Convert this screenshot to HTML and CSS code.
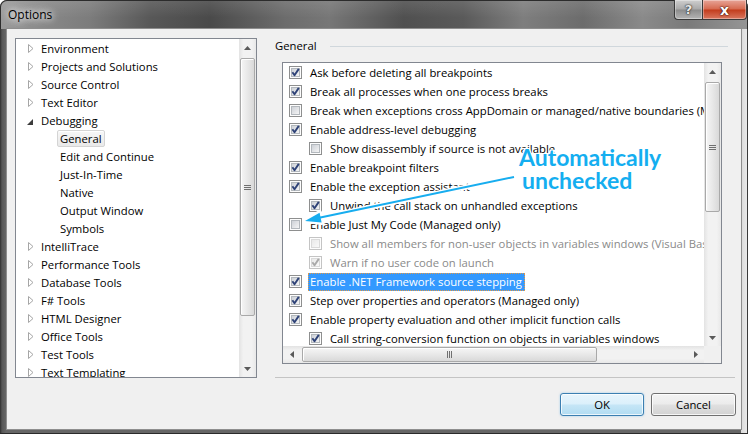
FILE: index.html
```html
<!DOCTYPE html>
<html>
<head>
<meta charset="utf-8">
<title>Options</title>
<link rel="stylesheet" href="styles.css">
</head>
<body>
<svg class="defs" width="0" height="0">
  <defs>
    <linearGradient id="cbg" x1="0" y1="0" x2="1" y2="1"><stop offset="0" stop-color="#cbcfd5"/><stop offset="1" stop-color="#f7f7f7"/></linearGradient>
    <linearGradient id="cbgd" x1="0" y1="0" x2="1" y2="1"><stop offset="0" stop-color="#e8e8e8"/><stop offset="1" stop-color="#fafafa"/></linearGradient>
    <symbol id="box" viewBox="0 0 13 13"><rect x=".5" y=".5" width="12" height="12" fill="#fdfdfd" stroke="#8e8f8f"/><rect x="2.5" y="2.5" width="8" height="8" fill="url(#cbg)" stroke="#b3b8bd"/></symbol>
    <symbol id="boxd" viewBox="0 0 13 13"><rect x=".5" y=".5" width="12" height="12" fill="#fdfdfd" stroke="#c4c4c4"/><rect x="2.5" y="2.5" width="8" height="8" fill="url(#cbgd)" stroke="#dadada"/></symbol>
    <symbol id="chk" viewBox="0 0 13 13"><path d="M3.4 6.2 L5.5 9.2 L9.8 2.9" fill="none" stroke="#2e4277" stroke-width="1.9" stroke-linejoin="round"/></symbol>
    <symbol id="chkd" viewBox="0 0 13 13"><path d="M3.4 6.2 L5.5 9.2 L9.8 2.9" fill="none" stroke="#a9a9a9" stroke-width="1.9" stroke-linejoin="round"/></symbol>
    <symbol id="tc" viewBox="0 0 6 9"><path d="M.5 .5 L5 4.5 L.5 8.5Z" fill="#fff" stroke="#a6a6a6"/></symbol>
    <symbol id="te" viewBox="0 0 6 6"><path d="M6 0 V6 H0Z" fill="#3c3c3c"/></symbol>
    <symbol id="aup" viewBox="0 0 7 4"><path d="M0 4 L3.5 0 L7 4Z" fill="#5a5a5a"/></symbol>
    <symbol id="adn" viewBox="0 0 7 4"><path d="M0 0 L3.5 4 L7 0Z" fill="#5a5a5a"/></symbol>
    <symbol id="alf" viewBox="0 0 4 7"><path d="M4 0 L0 3.5 L4 7Z" fill="#5a5a5a"/></symbol>
    <symbol id="art" viewBox="0 0 4 7"><path d="M0 0 L4 3.5 L0 7Z" fill="#5a5a5a"/></symbol>
  </defs>
</svg>

<div class="window">
  <div class="titlebar">
    <div class="title">Options</div>
    <div class="capbtns">
      <div class="cbtn help">?</div>
      <div class="cbtn close">x</div>
    </div>
  </div>

  <div class="client">
    <div class="main">
      <div class="tree">
        <div class="tree-items">
          <div class="ti"><svg class="tg"><use href="#tc"/></svg><span>Environment</span></div>
          <div class="ti"><svg class="tg"><use href="#tc"/></svg><span>Projects and Solutions</span></div>
          <div class="ti"><svg class="tg"><use href="#tc"/></svg><span>Source Control</span></div>
          <div class="ti"><svg class="tg"><use href="#tc"/></svg><span>Text Editor</span></div>
          <div class="ti"><svg class="tg ex"><use href="#te"/></svg><span>Debugging</span></div>
          <div class="ti child"><span class="sel">General</span></div>
          <div class="ti child"><span>Edit and Continue</span></div>
          <div class="ti child"><span>Just-In-Time</span></div>
          <div class="ti child"><span>Native</span></div>
          <div class="ti child"><span>Output Window</span></div>
          <div class="ti child"><span>Symbols</span></div>
          <div class="ti"><svg class="tg"><use href="#tc"/></svg><span>IntelliTrace</span></div>
          <div class="ti"><svg class="tg"><use href="#tc"/></svg><span>Performance Tools</span></div>
          <div class="ti"><svg class="tg"><use href="#tc"/></svg><span>Database Tools</span></div>
          <div class="ti"><svg class="tg"><use href="#tc"/></svg><span>F# Tools</span></div>
          <div class="ti"><svg class="tg"><use href="#tc"/></svg><span>HTML Designer</span></div>
          <div class="ti"><svg class="tg"><use href="#tc"/></svg><span>Office Tools</span></div>
          <div class="ti"><svg class="tg"><use href="#tc"/></svg><span>Test Tools</span></div>
          <div class="ti"><svg class="tg"><use href="#tc"/></svg><span>Text Templating</span></div>
        </div>
        <div class="vscroll">
          <div class="sbtn"><svg class="sa"><use href="#aup"/></svg></div>
          <div class="strack"><div class="vthumb tree-thumb"><span class="vgrip"></span></div></div>
          <div class="sbtn"><svg class="sa"><use href="#adn"/></svg></div>
        </div>
      </div>

      <div class="pane">
        <div class="pane-head"><span class="ph-text">General</span><span class="hline"></span></div>
        <div class="listbox">
          <div class="rows">
            <div class="r"><svg class="cb"><use href="#box"/><use href="#chk"/></svg><span>Ask before deleting all breakpoints</span></div>
            <div class="r"><svg class="cb"><use href="#box"/><use href="#chk"/></svg><span>Break all processes when one process breaks</span></div>
            <div class="r"><svg class="cb"><use href="#box"/></svg><span>Break when exceptions cross AppDomain or managed/native boundaries (Managed only)</span></div>
            <div class="r"><svg class="cb"><use href="#box"/><use href="#chk"/></svg><span>Enable address-level debugging</span></div>
            <div class="r n"><svg class="cb"><use href="#box"/></svg><span>Show disassembly if source is not available</span></div>
            <div class="r"><svg class="cb"><use href="#box"/><use href="#chk"/></svg><span>Enable breakpoint filters</span></div>
            <div class="r"><svg class="cb"><use href="#box"/><use href="#chk"/></svg><span>Enable the exception assistant</span></div>
            <div class="r n"><svg class="cb"><use href="#box"/><use href="#chk"/></svg><span>Unwind the call stack on unhandled exceptions</span></div>
            <div class="r"><svg class="cb"><use href="#box"/></svg><span>Enable Just My Code (Managed only)</span></div>
            <div class="r n dis"><svg class="cb"><use href="#boxd"/></svg><span>Show all members for non-user objects in variables windows (Visual Basic only)</span></div>
            <div class="r n dis"><svg class="cb"><use href="#boxd"/><use href="#chkd"/></svg><span>Warn if no user code on launch</span></div>
            <div class="r"><svg class="cb"><use href="#box"/><use href="#chk"/></svg><span class="hl">Enable .NET Framework source stepping</span></div>
            <div class="r"><svg class="cb"><use href="#box"/><use href="#chk"/></svg><span>Step over properties and operators (Managed only)</span></div>
            <div class="r"><svg class="cb"><use href="#box"/><use href="#chk"/></svg><span>Enable property evaluation and other implicit function calls</span></div>
            <div class="r n"><svg class="cb"><use href="#box"/><use href="#chk"/></svg><span>Call string-conversion function on objects in variables windows</span></div>
          </div>
          <div class="vscroll">
            <div class="sbtn"><svg class="sa"><use href="#aup"/></svg></div>
            <div class="strack"><div class="vthumb list-thumb"><span class="vgrip"></span></div></div>
            <div class="sbtn"><svg class="sa"><use href="#adn"/></svg></div>
          </div>
          <div class="hscroll">
            <div class="hbtn"><svg class="sah"><use href="#alf"/></svg></div>
            <div class="htrack"><div class="hthumb"><span class="hgrip"></span></div></div>
            <div class="hbtn"><svg class="sah"><use href="#art"/></svg></div>
          </div>
          <div class="corner"></div>
        </div>
        <div class="sep"></div>
      </div>
    </div>

    <div class="buttons">
      <button class="btn ok">OK</button>
      <button class="btn cancel">Cancel</button>
    </div>
  </div>
</div>

<div class="callout">
  <div class="c1">Automatically</div>
  <div class="c2">unchecked</div>
</div>

<svg class="arrow" viewBox="0 0 751 434" width="751" height="434">
  <g stroke="#ffffff" stroke-width="5" stroke-linecap="round" stroke-linejoin="round" fill="#ffffff">
    <line x1="514" y1="177" x2="320" y2="217.7"/>
    <polygon points="305,221 321.6,222.6 319.6,212.8"/>
  </g>
  <line x1="514" y1="177" x2="318" y2="218" stroke="#17adef" stroke-width="2"/>
  <polygon points="305,221 321.6,222.6 319.6,212.8" fill="#17adef"/>
</svg>
</body>
</html>
```

FILE: styles.css
```css
* { box-sizing: border-box; }

html, body {
  margin: 0;
  padding: 0;
  background: #ffffff;
}

body {
  width: 751px;
  height: 434px;
  overflow: hidden;
  position: relative;
  font-family: "Open Sans", "Segoe UI", sans-serif;
  font-size: 11.3px;
  color: #000;
}

.defs {
  display: block;
  width: 0;
  height: 0;
  overflow: hidden;
  position: absolute;
}

/* ---------- window frame ---------- */
.window {
  width: 748px;
  height: 434px;
  display: flex;
  flex-direction: column;
  border-radius: 7px 7px 0 0;
  background: linear-gradient(to right, #2e2e2e 0px, #575757 2px, #666 6px, #666 741px, #d9d9d9 741px, #e9e9e9 747px, #3a3a3a 747px);
  box-shadow: inset 0 -1px 0 #2a2a2a;
}

.titlebar {
  height: 29px;
  flex: none;
  display: flex;
  justify-content: space-between;
  align-items: flex-start;
  border-radius: 7px 7px 0 0;
  border: 1px solid #2c2c2c;
  border-bottom: none;
  background:
    linear-gradient(to bottom, rgba(255,255,255,0.10), rgba(255,255,255,0) 60%),
    linear-gradient(to right, #9a9a9a 0%, #888 6%, #7c7c7c 12%, #585858 20%, #4a4a4a 28%, #6c6c6c 38%, #777 44%, #505050 54%, #5a5a5a 62%, #7e7e7e 70%, #6c6c6c 78%, #8a8a8a 86%, #7a7a7a 92%, #959595 100%);
}

.title {
  line-height: 28px;
  padding-left: 7px;
  font-size: 12px;
  color: #000;
  text-shadow: 0 0 6px #fff, 0 0 10px rgba(255,255,255,0.8), 0 0 14px rgba(255,255,255,0.6);
}

.capbtns {
  display: flex;
  margin-top: -1px;
}

.cbtn {
  height: 20px;
  border: 1px solid #3a3a3a;
  border-top: none;
  display: flex;
  align-items: center;
  justify-content: center;
  font-family: "DejaVu Sans", sans-serif;
  font-weight: bold;
  color: #fff;
  box-shadow: inset 0 0 0 1px rgba(255,255,255,0.35);
}

.help {
  width: 28px;
  border-radius: 0 0 0 4px;
  border-right: none;
  font-size: 13px;
  color: #e8e8e8;
  text-shadow: 0 0 2px #222, 0 0 1px #000;
  background: linear-gradient(#cfcfcf, #a9a9a9 48%, #8c8c8c 52%, #b4b4b4);
}

.close {
  width: 45px;
  border-radius: 0 0 4px 0;
  font-size: 14px;
  text-shadow: 0 0 2px #3a0a00, 0 0 1px #000;
  background: linear-gradient(#e7a598, #d6694f 48%, #c23c1c 52%, #d9775f);
}

/* ---------- client area ---------- */
.client {
  flex: 1;
  margin: 0 7px 5px 7px;
  background: #f0f0f0;
  padding: 9px 5px 0 8px;
  display: flex;
  flex-direction: column;
  box-shadow: 0 0 0 1px #8e8e8e;
}

.main {
  display: flex;
  height: 340px;
}

/* ---------- tree ---------- */
.tree {
  width: 242px;
  height: 340px;
  flex: none;
  border: 1px solid #828790;
  background: #fff;
  display: flex;
}

.tree-items {
  flex: 1;
  overflow: hidden;
}

.ti {
  height: 18px;
  display: flex;
  align-items: center;
  white-space: nowrap;
}

.tg {
  width: 6px;
  height: 9px;
  flex: none;
  margin-left: 12px;
  margin-right: 7px;
}

.tg.ex {
  width: 6px;
  height: 6px;
  margin-left: 11px;
  margin-right: 8px;
  margin-top: 3px;
}

.ti.child {
  padding-left: 44px;
}

.sel {
  margin-left: -3px;
  height: 17px;
  line-height: 15px;
  padding: 0 2px;
  border: 1px solid #d4d4d4;
  border-radius: 2px;
  background: linear-gradient(#f7f7f7, #e9e9e9);
  box-shadow: inset 0 1px 0 #fff;
}

/* ---------- scrollbars ---------- */
.vscroll {
  width: 17px;
  flex: none;
  display: flex;
  flex-direction: column;
  background: linear-gradient(to right, #e3e3e3, #f2f2f2 25%, #f2f2f2 75%, #e8e8e8);
}

.sbtn {
  height: 17px;
  flex: none;
  display: flex;
  align-items: center;
  justify-content: center;
}

.sa {
  width: 7px;
  height: 4px;
}

.strack {
  flex: 1;
  display: flex;
  flex-direction: column;
  padding: 0 1px;
}

.vthumb {
  margin-top: 2px;
  border: 1px solid #a9a9a9;
  border-radius: 2px;
  background: linear-gradient(to right, #f6f6f6, #e8e8e8 50%, #d9d9d9);
  box-shadow: inset 1px 1px 0 #fff;
  display: flex;
  align-items: center;
  justify-content: center;
}

.tree-thumb { height: 258px; }
.list-thumb { height: 130px; }

.vgrip {
  width: 7px;
  height: 5px;
  background: repeating-linear-gradient(to bottom, #707070 0, #707070 1px, transparent 1px, transparent 2px);
}

.hscroll {
  grid-column: 1;
  grid-row: 2;
  height: 17px;
  display: flex;
  background: linear-gradient(to bottom, #e3e3e3, #f2f2f2 25%, #f2f2f2 75%, #e8e8e8);
}

.hbtn {
  width: 17px;
  flex: none;
  display: flex;
  align-items: center;
  justify-content: center;
}

.sah {
  width: 4px;
  height: 7px;
}

.htrack {
  flex: 1;
  display: flex;
  padding: 1px 0;
}

.hthumb {
  margin-left: 2px;
  width: 295px;
  border: 1px solid #a9a9a9;
  border-radius: 2px;
  background: linear-gradient(to bottom, #f6f6f6, #e8e8e8 50%, #d9d9d9);
  box-shadow: inset 1px 1px 0 #fff;
  display: flex;
  align-items: center;
  justify-content: center;
}

.hgrip {
  width: 5px;
  height: 7px;
  background: repeating-linear-gradient(to right, #707070 0, #707070 1px, transparent 1px, transparent 2px);
}

.corner {
  grid-column: 2;
  grid-row: 2;
  background: #f0f0f0;
}

/* ---------- right pane ---------- */
.pane {
  width: 460px;
  margin-left: 18px;
  display: flex;
  flex-direction: column;
}

.pane-head {
  height: 16px;
  display: flex;
  align-items: center;
}

.ph-text {
  width: 55px;
  line-height: 16px;
}

.hline {
  flex: 1;
  height: 1px;
  margin-right: 7px;
  background: #d0d7dc;
}

.listbox {
  margin: 8px 0 0 7px;
  width: 440px;
  height: 302px;
  border: 1px solid #828790;
  background: #fff;
  display: grid;
  grid-template-columns: 1fr 17px;
  grid-template-rows: 1fr 17px;
}

.rows {
  grid-column: 1;
  grid-row: 1;
  overflow: hidden;
}

.r {
  height: 19px;
  display: flex;
  align-items: center;
  white-space: nowrap;
  padding-left: 6px;
}

.r.n { padding-left: 26px; }

.cb {
  width: 13px;
  height: 13px;
  flex: none;
  margin-right: 8px;
}

.r.dis { color: #8a8a8a; }

.hl {
  margin-left: -2px;
  padding: 0 2px 0 1px;
  height: 18px;
  line-height: 16px;
  background: #3399ff;
  color: #fff;
  border: 1px dotted #e59a45;
}

.sep {
  margin-top: 13px;
  height: 1px;
  background: #c4c4c4;
}

/* ---------- buttons ---------- */
.buttons {
  margin-top: 15px;
  display: flex;
  justify-content: flex-end;
  gap: 7px;
}

.btn {
  height: 23px;
  padding: 0;
  font-family: inherit;
  font-size: 11.3px;
  color: #000;
  border-radius: 3px;
}

.ok {
  width: 84px;
  border: 1px solid #3c7fb1;
  background: linear-gradient(#e8f5fc, #dcf0fb 45%, #c4e5f6 55%, #b2dcf2);
  box-shadow: inset 0 0 0 1px rgba(255,255,255,0.75), 0 0 2px rgba(60,160,230,0.5);
}

.cancel {
  width: 85px;
  border: 1px solid #707070;
  background: linear-gradient(#f3f3f3, #ececec 45%, #dfdfdf 55%, #d2d2d2);
  box-shadow: inset 0 0 0 1px rgba(255,255,255,0.8);
}

/* ---------- annotation overlay ---------- */
.callout {
  position: absolute;
  left: 519px;
  top: 146px;
  font-family: Lato, "Open Sans", sans-serif;
  font-weight: bold;
  font-size: 23px;
  line-height: 23px;
  color: #14aef0;
  text-shadow: 1px 0 0 #fff, -1px 0 0 #fff, 0 1px 0 #fff, 0 -1px 0 #fff, 1px 1px 0 #fff, -1px -1px 0 #fff, 1px -1px 0 #fff, -1px 1px 0 #fff;
}

.c2 { padding-left: 3px; }

.arrow {
  position: absolute;
  left: 0;
  top: 0;
  pointer-events: none;
}
```
